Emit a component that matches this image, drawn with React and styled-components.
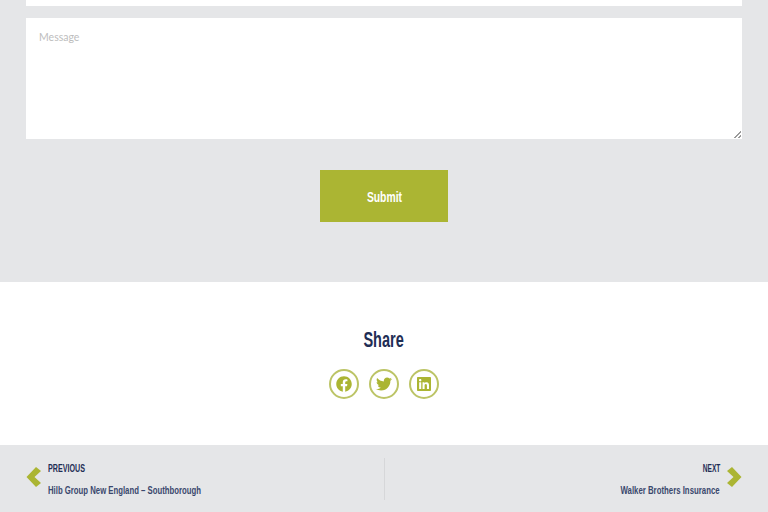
import styled, { createGlobalStyle } from "styled-components";
import { FaFacebook, FaTwitter, FaLinkedin } from "react-icons/fa";

const GlobalStyle = createGlobalStyle`
  html, body {
    margin: 0;
    padding: 0;
    background: #fff;
    overflow: hidden;
  }
`;

const Page = styled.div`
  width: 768px;
  height: 512px;
  overflow: hidden;
  font-family: "Liberation Sans", Arial, sans-serif;
`;

// no condensed font on the box, so the heading face gets squeezed
const Narrow = styled.span`
  display: inline-block;
  white-space: nowrap;
  transform: scaleX(${(props) => props.$scale});
  transform-origin: ${(props) => props.$origin || "center"};
`;

const FormSection = styled.form`
  box-sizing: border-box;
  height: 282px;
  padding: 0 26px;
  background: #e5e6e8;
  display: flex;
  flex-direction: column;
`;

const CutInput = styled.div`
  height: 6px;
  background: #fff;
`;

const MessageBox = styled.textarea`
  box-sizing: border-box;
  display: block;
  width: 716px;
  height: 121px;
  margin-top: 12px;
  padding: 12px 13px;
  border: 0;
  border-radius: 0;
  outline: 0;
  background: #fff;
  font-family: Lato, sans-serif;
  font-size: 10.5px;
  line-height: 15px;
  &::placeholder {
    color: #bdbdbd;
    opacity: 1;
  }
  &::-webkit-resizer {
    background: linear-gradient(
        135deg,
        transparent 48%,
        #9a9a9a 48%,
        #9a9a9a 60%,
        transparent 60%,
        transparent 74%,
        #9a9a9a 74%,
        #9a9a9a 86%,
        transparent 86%
      )
      right 1px bottom 1px / 7px 7px no-repeat;
  }
`;

const SubmitButton = styled.button`
  align-self: center;
  width: 128px;
  height: 52px;
  margin-top: 31px;
  border: 0;
  padding: 0;
  background: #abb533;
  color: #fff;
  font-family: inherit;
  font-size: 15px;
  font-weight: 700;
`;

const ShareSection = styled.section`
  box-sizing: border-box;
  height: 163px;
  padding-top: 43px;
  display: flex;
  flex-direction: column;
  align-items: center;
`;

const ShareTitle = styled.h2`
  margin: 0;
  height: 30px;
  color: #1f2e55;
  font-size: 22px;
  font-weight: 700;
  line-height: 30px;
`;

const ShareRow = styled.div`
  display: flex;
  gap: 10px;
  margin-top: 14px;
`;

const ShareLink = styled.a`
  box-sizing: border-box;
  width: 30px;
  height: 30px;
  border: 2px solid #bcc466;
  border-radius: 50%;
  display: flex;
  align-items: center;
  justify-content: center;
  color: #abb533;
  font-size: 16px;
`;

const PostNav = styled.nav`
  box-sizing: border-box;
  height: 67px;
  padding: 13px 26px 12px;
  background: #e5e6e8;
  display: flex;
`;

const NavSide = styled.a`
  flex: 1;
  display: flex;
  align-items: center;
  gap: 7px;
  justify-content: ${(props) => (props.$next ? "flex-end" : "flex-start")};
  text-align: ${(props) => (props.$next ? "right" : "left")};
  border-left: ${(props) => (props.$next ? "1px solid #d6d7d9" : "0")};
`;

const NavText = styled.div`
  display: flex;
  flex-direction: column;
  align-items: ${(props) => (props.$next ? "flex-end" : "flex-start")};
  gap: 8px;
  color: #1f2e55;
`;

const NavLabel = styled.div`
  font-size: 11px;
  line-height: 14px;
  font-weight: 700;
  text-transform: uppercase;
`;

const NavTitle = styled.div`
  font-size: 11px;
  line-height: 14px;
  font-weight: 700;
  color: #3a486d;
`;

const ChevronIcon = styled.svg`
  flex: none;
  margin-bottom: 4px;
  transform: ${(props) => (props.$flip ? "scaleX(-1)" : "none")};
`;

const Chevron = ({ flip }) => (
  <ChevronIcon $flip={flip} width="15" height="20" viewBox="0 0 15 20">
    <polygon points="10,0 15,4 8.5,10 15,16 10,20 0.5,10" fill="#abb533" />
  </ChevronIcon>
);

export default function App() {
  return (
    <Page>
      <GlobalStyle />
      <FormSection onSubmit={(e) => e.preventDefault()}>
        <CutInput />
        <MessageBox placeholder="Message" />
        <SubmitButton type="submit">
          <Narrow $scale={0.69}>Submit</Narrow>
        </SubmitButton>
      </FormSection>
      <ShareSection>
        <ShareTitle>
          <Narrow $scale={0.66}>Share</Narrow>
        </ShareTitle>
        <ShareRow>
          <ShareLink><FaFacebook /></ShareLink>
          <ShareLink><FaTwitter /></ShareLink>
          <ShareLink><FaLinkedin /></ShareLink>
        </ShareRow>
      </ShareSection>
      <PostNav>
        <NavSide>
          <Chevron />
          <NavText>
            <NavLabel><Narrow $scale={0.65} $origin="left">Previous</Narrow></NavLabel>
            <NavTitle><Narrow $scale={0.705} $origin="left">Hilb Group New England – Southborough</Narrow></NavTitle>
          </NavText>
        </NavSide>
        <NavSide $next>
          <NavText $next>
            <NavLabel><Narrow $scale={0.6} $origin="right">Next</Narrow></NavLabel>
            <NavTitle><Narrow $scale={0.71} $origin="right">Walker Brothers Insurance</Narrow></NavTitle>
          </NavText>
          <Chevron flip />
        </NavSide>
      </PostNav>
    </Page>
  );
}
